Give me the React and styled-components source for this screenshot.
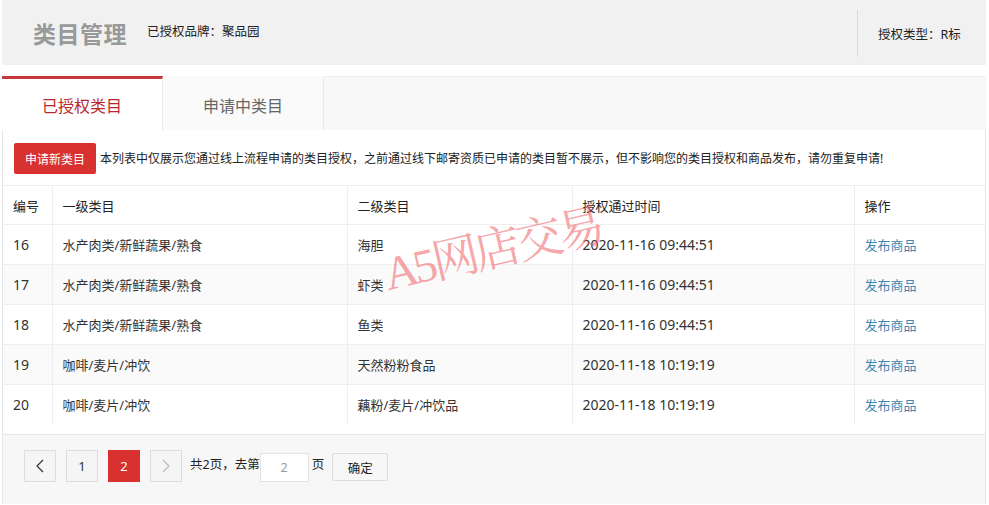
import React from 'react';
import styled, { createGlobalStyle } from 'styled-components';

const GlobalStyle = createGlobalStyle`
  html, body {
    margin: 0;
    padding: 0;
    background: #fff;
  }
  body {
    font-family: "Noto Sans", "Noto Sans CJK SC", "Microsoft YaHei", sans-serif;
    font-size: 13px;
    color: #333;
  }
`;

const Page = styled.div`
  position: relative;
  width: 984px;
  height: 505px;
  margin-left: 2px;
  overflow: hidden;
`;

const Header = styled.div`
  height: 65px;
  background: #f1f1f1;
  display: flex;
  align-items: center;
  padding-left: 31px;
`;

const Title = styled.h1`
  margin: 0 20px 0 0;
  font-size: 23px;
  font-weight: bold;
  color: #999;
  letter-spacing: 0.5px;
`;

const Brand = styled.span`
  font-size: 12.5px;
  color: #222;
  margin-bottom: 4px;
`;

const HeaderRight = styled.div`
  margin-left: auto;
  height: 47px;
  border-left: 1px solid #d9d9d9;
  width: 108px;
  display: flex;
  align-items: center;
  padding-left: 20px;
  font-size: 12.5px;
  color: #222;
  margin-top: 2px;
`;

const Tabs = styled.div`
  margin-top: 11px;
  height: 53px;
  display: flex;
  background: #f8f8f8;
  border-top: 1px solid #eee;
`;

const Tab = styled.div`
  width: 160px;
  display: flex;
  align-items: center;
  justify-content: center;
  font-size: 16px;
  color: ${p => (p.$active ? '#b8282d' : '#666')};
  background: ${p => (p.$active ? '#fff' : '#fafafa')};
  border-top: 3px solid ${p => (p.$active ? '#c7383a' : 'transparent')};
  border-right: 1px solid #eaeaea;
  margin-top: -1px;
`;

const Panel = styled.div`
  border: 1px solid #e6e6e6;
  border-top: none;
  border-bottom: none;
`;

const Notice = styled.div`
  height: 55px;
  display: flex;
  align-items: center;
  padding-left: 11px;
  gap: 4px;
  font-size: 12px;
  color: #222;
`;

const RedButton = styled.button`
  height: 31px;
  padding: 0 11px;
  border: none;
  border-radius: 2px;
  background: #d9312f;
  color: #fff;
  font-family: inherit;
  font-size: 12px;
  margin-top: 2px;
`;

const Table = styled.table`
  width: 100%;
  border-collapse: collapse;
  font-size: 13px;
`;

const Th = styled.th`
  height: 38px;
  text-align: left;
  font-weight: normal;
  color: #222;
  padding: 0 10px;
  border-top: 1px solid #eee;
  border-left: 1px solid #eee;
  &:first-child { border-left: none; }
`;

const Tr = styled.tr`
  background: ${p => (p.$striped ? '#fafafa' : '#fff')};
`;

const Td = styled.td`
  height: 39px;
  padding: 0 10px;
  color: #333;
  font-size: ${p => (p.$num ? '14px' : '13px')};
  border-top: 1px solid #eee;
  border-left: 1px solid #eee;
  &:first-child { border-left: none; }
`;

const Link = styled.a`
  color: #3f86b3;
  text-decoration: none;
`;

const Footer = styled.div`
  margin-top: 10px;
  height: 70px;
  box-sizing: border-box;
  padding: 15px 0 0 21px;
  background: #f7f7f7;
  border-top: 1px solid #e6e6e6;
  display: flex;
  align-items: flex-start;
  font-size: 12.5px;
  color: #222;
`;

const PageBtn = styled.div`
  width: 30px;
  height: 30px;
  border: 1px solid ${p => (p.$active ? '#d9312f' : '#ddd')};
  background: ${p => (p.$active ? '#d9312f' : '#f5f5f5')};
  color: ${p => (p.$active ? '#fff' : p.$muted ? '#bbb' : '#333')};
  display: flex;
  align-items: center;
  justify-content: center;
  margin-right: 10px;
  font-size: 13px;
`;

const Label = styled.span`
  margin-left: -2px;
  line-height: 30px;
`;

const JumpInput = styled.div`
  width: 47px;
  height: 27px;
  margin-top: 3px;
  border: 1px solid #e2e2e2;
  background: #fff;
  color: #999;
  display: flex;
  align-items: center;
  justify-content: center;
  margin-right: 3px;
`;

const Unit = styled.span`
  line-height: 30px;
`;

const Confirm = styled.div`
  height: 26px;
  width: 54px;
  margin: 3px 0 0 8px;
  border: 1px solid #ddd;
  border-radius: 2px;
  background: #f7f7f7;
  display: flex;
  align-items: center;
  justify-content: center;
  color: #222;
`;

const Watermark = styled.div`
  position: absolute;
  left: 388px;
  top: 251px;
  font-family: "Liberation Serif", "Noto Serif CJK SC", serif;
  font-size: 47px;
  line-height: 1;
  letter-spacing: -4px;
  color: rgba(239, 90, 95, 0.55);
  transform: rotate(-13deg);
  transform-origin: left bottom;
  white-space: nowrap;
  pointer-events: none;
`;

const Chevron = ({ dir }) => (
  <svg width="10" height="14" viewBox="0 0 10 14">
    <path
      d={dir === 'left' ? 'M8 1 L2 7 L8 13' : 'M2 1 L8 7 L2 13'}
      fill="none"
      stroke="currentColor"
      strokeWidth="1.2"
    />
  </svg>
);

const rows = [
  ['16', '水产肉类/新鲜蔬果/熟食', '海胆', '2020-11-16 09:44:51'],
  ['17', '水产肉类/新鲜蔬果/熟食', '虾类', '2020-11-16 09:44:51'],
  ['18', '水产肉类/新鲜蔬果/熟食', '鱼类', '2020-11-16 09:44:51'],
  ['19', '咖啡/麦片/冲饮', '天然粉粉食品', '2020-11-18 10:19:19'],
  ['20', '咖啡/麦片/冲饮', '藕粉/麦片/冲饮品', '2020-11-18 10:19:19'],
];

const App = () => {
  return (
    <Page>
      <GlobalStyle />
      <Header>
        <Title>类目管理</Title>
        <Brand>已授权品牌：聚品园</Brand>
        <HeaderRight>授权类型：R标</HeaderRight>
      </Header>
      <Tabs>
        <Tab $active>已授权类目</Tab>
        <Tab>申请中类目</Tab>
      </Tabs>
      <Panel>
        <Notice>
          <RedButton>申请新类目</RedButton>
          本列表中仅展示您通过线上流程申请的类目授权，之前通过线下邮寄资质已申请的类目暂不展示，但不影响您的类目授权和商品发布，请勿重复申请!
        </Notice>
        <Table>
          <colgroup>
            <col style={{ width: 49 }} />
            <col style={{ width: 295 }} />
            <col style={{ width: 225 }} />
            <col style={{ width: 282 }} />
            <col />
          </colgroup>
          <thead>
            <tr>
              <Th>编号</Th>
              <Th>一级类目</Th>
              <Th>二级类目</Th>
              <Th>授权通过时间</Th>
              <Th>操作</Th>
            </tr>
          </thead>
          <tbody>
            {rows.map((r, i) => (
              <Tr key={r[0]} $striped={i % 2 === 1}>
                <Td $num>{r[0]}</Td>
                <Td>{r[1]}</Td>
                <Td>{r[2]}</Td>
                <Td $num>{r[3]}</Td>
                <Td><Link href="#">发布商品</Link></Td>
              </Tr>
            ))}
          </tbody>
        </Table>
        <Footer>
          <PageBtn><Chevron dir="left" /></PageBtn>
          <PageBtn>1</PageBtn>
          <PageBtn $active>2</PageBtn>
          <PageBtn $muted><Chevron dir="right" /></PageBtn>
          <Label>共2页，去第</Label>
          <JumpInput>2</JumpInput>
          <Unit>页</Unit>
          <Confirm>确定</Confirm>
        </Footer>
      </Panel>
      <Watermark>A5网店交易</Watermark>
    </Page>
  );
};

export default App;
